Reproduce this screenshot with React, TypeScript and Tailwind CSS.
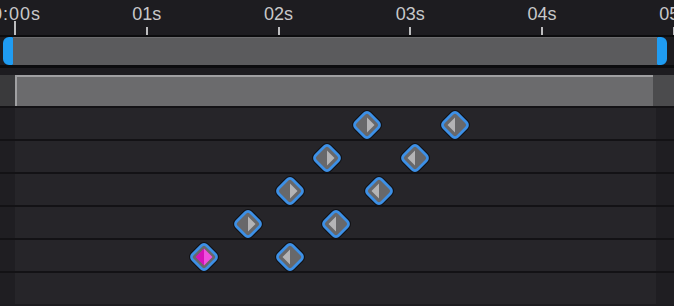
import React from 'react';

// Timeline scale: pixels per second and where 0s sits
const PX_PER_SEC = 131.75;
const ORIGIN_X = 15;

interface Keyframe {
  x: number;
  dir: 'in' | 'out';
  active?: boolean;
}

// Keyframes per track (x is the centre inside the track lane)
const tracks: Keyframe[][] = [
  [{ x: 352, dir: 'in' }, { x: 440, dir: 'out' }],
  [{ x: 312, dir: 'in' }, { x: 400, dir: 'out' }],
  [{ x: 275, dir: 'in' }, { x: 364, dir: 'out' }],
  [{ x: 233, dir: 'in' }, { x: 321, dir: 'out' }],
  [{ x: 189, dir: 'in', active: true }, { x: 275, dir: 'out' }],
  [],
];

const labels = ['0:00s', '01s', '02s', '03s', '04s', '05s'];

// Single keyframe diamond
function KeyframeDiamond({ kf }: { kf: Keyframe }) {
  return (
    <svg
      width="34"
      height="34"
      viewBox="0 0 34 34"
      className="absolute top-1/2 -translate-x-1/2 -translate-y-1/2 mt-[1px]"
      style={{ left: kf.x }}
    >
      <rect
        x="7"
        y="7"
        width="20"
        height="20"
        rx="4"
        transform="rotate(45 17 17)"
        fill="#68686a"
        stroke="#111114"
        strokeWidth="5"
      />
      <rect
        x="7"
        y="7"
        width="20"
        height="20"
        rx="4"
        transform="rotate(45 17 17)"
        fill="#68686a"
        stroke="#3d90e6"
        strokeWidth="2.8"
      />
      {kf.active ? (
        <>
          <polygon points="17,8.5 8.5,17 17,25.5" fill="#d512b9" />
          <polygon points="17,8.5 25.5,17 17,25.5" fill="#f04fdf" />
        </>
      ) : kf.dir === 'in' ? (
        <polygon points="17,9.5 17,24.5 24.5,17" fill="#b4b4b6" />
      ) : (
        <polygon points="17,9.5 17,24.5 9.5,17" fill="#b4b4b6" />
      )}
    </svg>
  );
}

export default function App() {
  return (
    <div
      className="w-[674px] h-[306px] overflow-hidden bg-[#1d1c20] flex flex-col"
      style={{ fontFamily: '"Liberation Sans", Arial, sans-serif' }}
    >
      {/* Ruler */}
      <div className="relative h-[35px] shrink-0">
        {labels.map((label, i) => {
          const x = ORIGIN_X + i * PX_PER_SEC;
          return (
            <React.Fragment key={label}>
              <span
                className={`absolute top-[5px] text-[18px] leading-none text-[#c8c8ca] whitespace-nowrap ${
                  i === 0 ? 'tracking-[1px]' : '-translate-x-1/2'
                }`}
                style={{ left: i === 0 ? -8 : x }}
              >
                {label}
              </span>
              <div
                className={`absolute w-[2px] bg-[#bdbdbf] ${i === 0 ? 'top-[21px] h-[14px]' : 'top-[27px] h-[8px]'}`}
                style={{ left: x - 1 }}
              />
            </React.Fragment>
          );
        })}
      </div>

      {/* Scroll range bar */}
      <div className="h-[33px] shrink-0 border-t-2 border-b-[3px] border-[#0c0c0e] flex px-[3px] pr-[7px]">
        <div className="w-[10px] bg-[#1f9cf2] rounded-l-[6px] rounded-r-[1px]" />
        <div className="flex-1 bg-[#5b5b5d] border-t border-[#6c6c6e]" />
        <div className="w-[10px] bg-[#1f9cf2] rounded-r-[6px] rounded-l-[1px]" />
      </div>

      <div className="h-[7px] shrink-0" />

      {/* Summary track */}
      <div className="h-[31px] shrink-0 flex">
        <div className="w-[15px] bg-[#3a3a3c]" />
        <div className="w-[638px] bg-[#6b6b6d] border-t-2 border-l-2 border-[#a0a0a2]" />
        <div className="flex-1 bg-[#4b4b4d]" />
      </div>

      {/* Property tracks */}
      {tracks.map((kfs, i) => (
        <div key={i} className="h-[33px] shrink-0 flex border-t-2 border-[#131215]">
          <div className="w-[15px] bg-[#1f1e22]" />
          <div className="relative w-[641px] bg-[#262529]">
            {kfs.map((kf, j) => (
              <KeyframeDiamond key={j} kf={kf} />
            ))}
          </div>
          <div className="flex-1 bg-[#1f1e22]" />
        </div>
      ))}
    </div>
  );
}
